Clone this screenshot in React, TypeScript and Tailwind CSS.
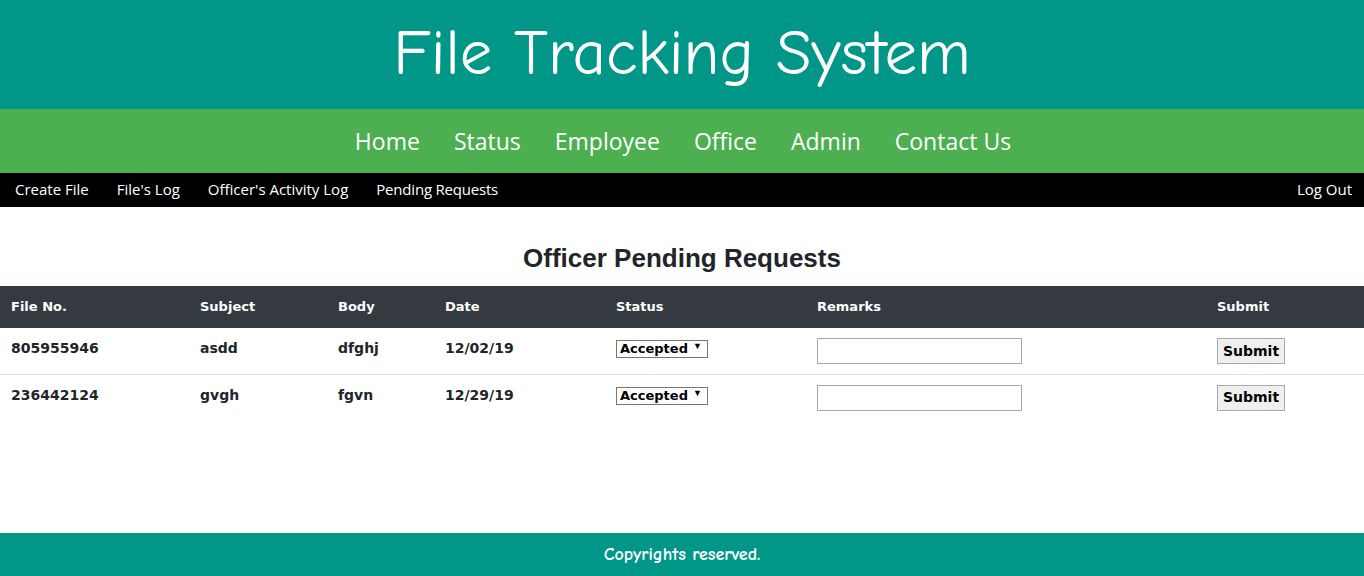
const rows = [
  { no: '805955946', subject: 'asdd', body: 'dfghj', date: '12/02/19' },
  { no: '236442124', subject: 'gvgh', body: 'fgvn', date: '12/29/19' },
];

const comic = { fontFamily: '"Comic Sans MS", "Comic Neue", "Noto Sans", sans-serif' };
const cell = "px-[11px] pt-[10px] align-top font-bold leading-[20px] font-['DejaVu_Sans',sans-serif] text-[14px]";

export default function App() {
  return (
    <div className="flex h-[576px] flex-col bg-white font-['Liberation_Sans',Arial,sans-serif]">
      <header
        className="flex h-[109px] items-center justify-center bg-[#009688] pb-[2px] text-[65px] text-white"
        style={comic}
      >
        File Tracking System
      </header>

      <nav className="flex h-[64px] items-center justify-center gap-[34px] bg-[#4caf50] pl-[2px] text-[23px] text-white font-['Open_Sans',sans-serif]">
        <a>Home</a>
        <a>Status</a>
        <a>Employee</a>
        <a>Office</a>
        <a>Admin</a>
        <a>Contact Us</a>
      </nav>

      <div className="flex h-[34px] items-center bg-black px-[15px] pb-[2px] text-white font-['Open_Sans',sans-serif]">
        <div className="flex gap-[28px] text-[15px]">
          <a>Create File</a>
          <a>File's Log</a>
          <a>Officer's Activity Log</a>
          <a className="tracking-[-0.2px]">Pending Requests</a>
        </div>
        <a className="ml-auto mr-[-3px] text-[15px]">Log Out</a>
      </div>

      <main>
        <h2 className="mt-[35px] mb-[12px] text-center text-[26px] font-bold leading-[32px] text-[#212529]">
          Officer Pending Requests
        </h2>
        <table className="w-full table-fixed border-collapse text-left text-[15px] text-[#212529]">
          <colgroup>
            <col className="w-[189px]" />
            <col className="w-[138px]" />
            <col className="w-[107px]" />
            <col className="w-[171px]" />
            <col className="w-[201px]" />
            <col className="w-[400px]" />
            <col />
          </colgroup>
          <thead>
            <tr className="h-[42px] bg-[#343a40] text-white">
              {['File No.', 'Subject', 'Body', 'Date', 'Status', 'Remarks', 'Submit'].map(h => (
                <th key={h} className="px-[11px] text-[13px] font-bold font-['DejaVu_Sans',sans-serif]">{h}</th>
              ))}
            </tr>
          </thead>
          <tbody>
            {rows.map((r, i) => (
              <tr key={r.no} className={i === 0 ? 'border-b border-[#dee2e6]' : ''}>
                <td className={`h-[46px] ${cell}`}>{r.no}</td>
                <td className={cell}>{r.subject}</td>
                <td className={cell}>{r.body}</td>
                <td className={cell}>{r.date}</td>
                <td className="px-[11px] pt-[9px] align-top">
                  <div className="relative h-[18px] w-[92px]">
                    <select className="h-[18px] w-[92px] appearance-none border border-[#767676] bg-white pl-[3px] text-[13px] font-bold leading-[16px] text-black font-['DejaVu_Sans',sans-serif]">
                      <option>Accepted</option>
                      <option>Rejected</option>
                    </select>
                    <span className="pointer-events-none absolute right-[6px] top-[1px] text-[9px] leading-[16px] text-black">▼</span>
                  </div>
                </td>
                <td className="px-[11px] pt-[10px] align-top">
                  <input className="h-[26px] w-[205px] border border-[#a9a9a9] bg-white" />
                </td>
                <td className="px-[11px] pt-[10px] align-top">
                  <button className="h-[26px] w-[68px] border border-[#a9a9a9] bg-[#efefef] text-[14px] font-bold text-black font-['DejaVu_Sans',sans-serif]">
                    Submit
                  </button>
                </td>
              </tr>
            ))}
          </tbody>
        </table>
      </main>

      <footer
        className="mt-auto flex h-[43px] items-center justify-center bg-[#009688] text-[18px] font-bold text-white"
        style={comic}
      >
        Copyrights reserved.
      </footer>
    </div>
  );
}
